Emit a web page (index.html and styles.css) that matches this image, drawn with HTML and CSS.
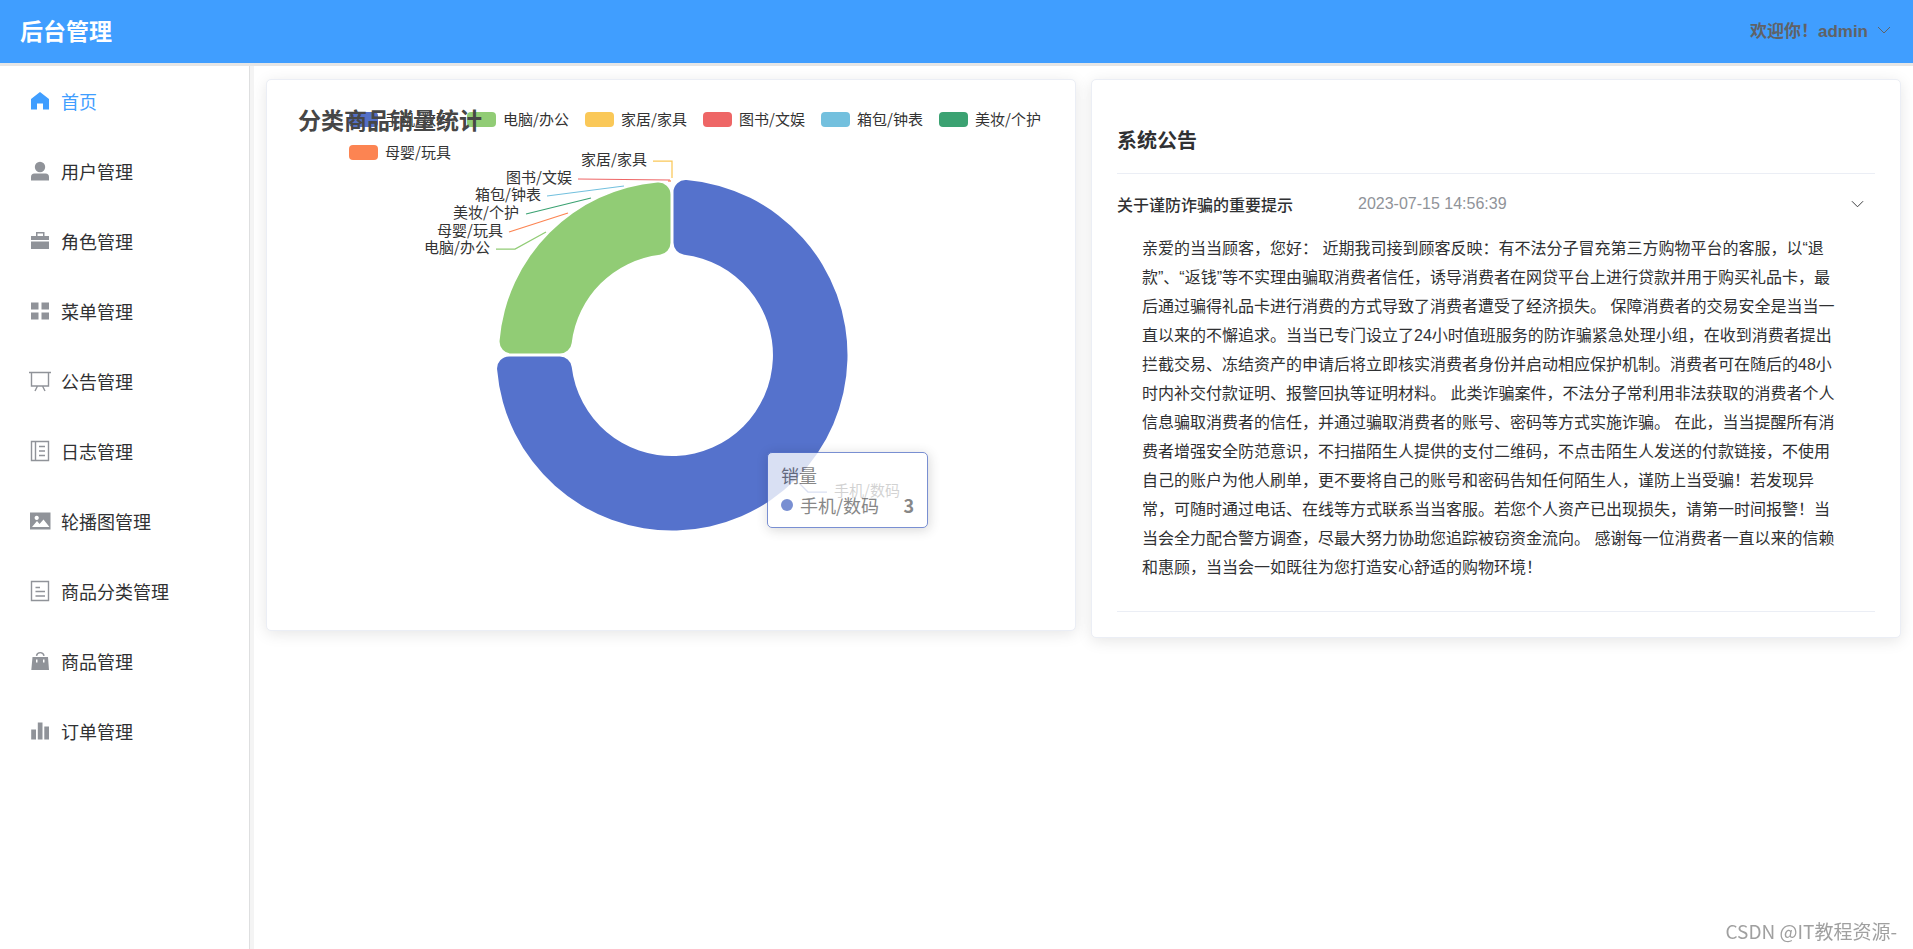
FILE: index.html
```html
<!DOCTYPE html>
<html lang="zh-CN">
<head>
<meta charset="utf-8">
<title>后台管理</title>
<link rel="stylesheet" href="styles.css">
</head>
<body>
<header class="topbar">
  <h1 class="brand">后台管理</h1>
  <button class="user-menu" type="button">
    <span>欢迎你！admin</span>
    <svg class="chevron" viewBox="0 0 14 8" aria-hidden="true"><path d="M1 1l6 6 6-6"/></svg>
  </button>
</header>

<div class="layout">
  <nav class="sidebar">
    <a class="nav-item active" href="#"><svg class="icon" viewBox="0 0 24 24"><path d="M12 3l9 7v10.500h-6v-6H9v6H3V10z"/></svg>首页</a>
    <a class="nav-item" href="#"><svg class="icon" viewBox="0 0 24 24"><circle cx="12" cy="8" r="5.200"/><path d="M3 21.500V18a3.500 3.500 0 0 1 3.500-3.500h11A3.500 3.500 0 0 1 21 18v3.500z"/></svg>用户管理</a>
    <a class="nav-item" href="#"><svg class="icon" viewBox="0 0 24 24"><path d="M3 7h5V3h8.500v4H21v4H3zM9.500 4.500V7h5.500V4.500zM3 12.500h18V20H3z" fill-rule="evenodd"/></svg>角色管理</a>
    <a class="nav-item" href="#"><svg class="icon" viewBox="0 0 24 24"><path d="M3 3.500h7.500v7H3zM13.500 3.500H21v7h-7.500zM3 13.500h7.500v7H3zM13.500 13.500H21v7h-7.500z"/></svg>菜单管理</a>
    <a class="nav-item" href="#"><svg class="icon line" viewBox="0 0 24 24"><path d="M1 3.500h22M3.500 3.500V17h17V3.500M9.500 17L7 22M14.500 17l2.500 5"/></svg>公告管理</a>
    <a class="nav-item" href="#"><svg class="icon line" viewBox="0 0 24 24"><path d="M3.500 2.500h17v19h-17zM7.500 2.500v19M11 7.500h6M11 12h6M11 16.500h6"/></svg>日志管理</a>
    <a class="nav-item" href="#"><svg class="icon" viewBox="0 0 24 24"><path fill-rule="evenodd" d="M2 3.500h20.500v17H2zM4 18h17.500l-6-7.500-4 4.500-2.500-3zM8.700 6.800a2.100 2.100 0 1 0 .01 0z"/></svg>轮播图管理</a>
    <a class="nav-item" href="#"><svg class="icon line" viewBox="0 0 24 24"><path d="M3.500 2.500h17v19h-17zM7.500 8.500H12M7.500 12.500H17M7.500 17H17"/></svg>商品分类管理</a>
    <a class="nav-item" href="#"><svg class="icon" viewBox="0 0 24 24"><path fill-rule="evenodd" d="M4.500 8h15.500l1 13H3.300zM8 10.500v3h1.500v-3zM15 10.500v3h1.500v-3z"/><path class="handle" d="M8.500 6.800a3.800 3.800 0 0 1 7.500 0"/></svg>商品管理</a>
    <a class="nav-item" href="#"><svg class="icon" viewBox="0 0 24 24"><path d="M3.200 10.500H8v10H3.200zM9.800 3.500h4.700v17H9.800zM16.300 7.500H21v13h-4.700z"/></svg>订单管理</a>
  </nav>

  <main class="content">
    <section class="card">
      <div class="chart">
        <ul class="legend">
          <li><i class="swatch blue"></i>手机/数码</li>
          <li><i class="swatch green"></i>电脑/办公</li>
          <li><i class="swatch yellow"></i>家居/家具</li>
          <li><i class="swatch red"></i>图书/文娱</li>
          <li><i class="swatch sky"></i>箱包/钟表</li>
          <li><i class="swatch teal"></i>美妆/个护</li>
          <li><i class="swatch orange"></i>母婴/玩具</li>
        </ul>
        <svg class="plot" viewBox="0 0 758 500" role="img" aria-label="分类商品销量统计">
          <g transform="translate(380 250)">
            <path fill="#5572cc" d="M1.500-162.900A12 12 0 0 1 14.500-174.900A175.500 175.500 0 1 1-174.900 14.500A12 12 0 0 1-162.900 1.500H-112.200A12 12 0 0 1-100.300 12.100A101 101 0 1 0 12.100-100.300A12 12 0 0 1 1.500-112.200Z"/>
            <path fill="#91cc75" d="M-1.500-160.400A12 12 0 0 0-14.500-172.400A173 173 0 0 0-172.400-14.500A12 12 0 0 0-160.400-1.500H-112.200A12 12 0 0 0-100.300-12.100A101 101 0 0 1-12.100-100.300A12 12 0 0 0-1.500-112.200Z"/>
          </g>
          <g class="leaders">
            <path stroke="#fac858" d="M361 56h19v17"/>
            <path stroke="#ee6666" d="M286 74l92 1"/>
            <path stroke="#73c0de" d="M255 91l77-10"/>
            <path stroke="#3ba272" d="M234 109l65-16"/>
            <path stroke="#fc8452" d="M217 127l59-19"/>
            <path stroke="#91cc75" d="M204 144h19l31-17"/>
            <path stroke="#5470c6" d="M507 378l9 9h19"/>
            <path stroke="#fc8452" d="M376 76h3"/>
          </g>
          <g class="labels">
            <text x="355" y="60">家居/家具</text>
            <text x="280" y="78">图书/文娱</text>
            <text x="249" y="95">箱包/钟表</text>
            <text x="227" y="113">美妆/个护</text>
            <text x="211" y="131">母婴/玩具</text>
            <text x="198" y="148">电脑/办公</text>
            <text class="after" x="542" y="391">手机/数码</text>
          </g>
        </svg>
        <h2 class="chart-title">分类商品销量统计</h2>
        <div class="tooltip">
          <div>销量</div>
          <div class="tooltip-row"><i class="dot"></i><span>手机/数码</span><b>3</b></div>
        </div>
      </div>
    </section>

    <section class="card">
      <h2 class="notice-title">系统公告</h2>
      <div class="notice">
        <button class="notice-head" type="button" aria-expanded="true">
          <span class="notice-name">关于谨防诈骗的重要提示</span>
          <time>2023-07-15 14:56:39</time>
          <svg class="chevron small" viewBox="0 0 14 8" aria-hidden="true"><path d="M1 1l6 6 6-6"/></svg>
        </button>
        <p class="notice-body">亲爱的当当顾客，您好： 近期我司接到顾客反映：有不法分子冒充第三方购物平台的客服，以“退款”、“返钱”等不实理由骗取消费者信任，诱导消费者在网贷平台上进行贷款并用于购买礼品卡，最后通过骗得礼品卡进行消费的方式导致了消费者遭受了经济损失。 保障消费者的交易安全是当当一直以来的不懈追求。当当已专门设立了24小时值班服务的防诈骗紧急处理小组，在收到消费者提出拦截交易、冻结资产的申请后将立即核实消费者身份并启动相应保护机制。消费者可在随后的48小时内补交付款证明、报警回执等证明材料。 此类诈骗案件，不法分子常利用非法获取的消费者个人信息骗取消费者的信任，并通过骗取消费者的账号、密码等方式实施诈骗。 在此，当当提醒所有消费者增强安全防范意识，不扫描陌生人提供的支付二维码，不点击陌生人发送的付款链接，不使用自己的账户为他人刷单，更不要将自己的账号和密码告知任何陌生人，谨防上当受骗！若发现异常，可随时通过电话、在线等方式联系当当客服。若您个人资产已出现损失，请第一时间报警！当当会全力配合警方调查，尽最大努力协助您追踪被窃资金流向。 感谢每一位消费者一直以来的信赖和惠顾，当当会一如既往为您打造安心舒适的购物环境！</p>
      </div>
    </section>
  </main>
</div>
<div class="watermark">CSDN @IT教程资源-</div>
</body>
</html>
```

FILE: styles.css
```css
* {
  box-sizing: border-box;
}

body {
  margin: 0;
  min-height: 100vh;
  display: flex;
  flex-direction: column;
  background: #fff;
  color: #303133;
  font-family: "Liberation Sans", "Noto Sans CJK SC", sans-serif;
  font-size: 18px;
}

h1, h2, p, ul {
  margin: 0;
  padding: 0;
}

button {
  border: 0;
  background: none;
  font: inherit;
  color: inherit;
  cursor: pointer;
}

.topbar {
  display: flex;
  align-items: center;
  justify-content: space-between;
  height: 66px;
  padding: 0 22px 4px 20px;
  background: #409eff;
  border-bottom: 3px solid #e6e6e6;
}

.brand {
  color: #fff;
  font-size: 23px;
}

.user-menu {
  display: flex;
  align-items: center;
  gap: 9px;
  padding: 0;
  color: #606266;
  font-size: 17px;
  font-weight: bold;
}

.chevron {
  width: 14px;
  height: 8px;
  fill: none;
  stroke: currentColor;
}

.chevron.small {
  width: 13px;
}

.layout {
  display: flex;
  flex: 1;
}

.sidebar {
  flex: 0 0 250px;
  border-right: 1px solid #dedfe0;
}

.nav-item {
  display: flex;
  align-items: center;
  gap: 9px;
  height: 70px;
  padding-left: 28px;
  color: #303133;
  text-decoration: none;
}

.icon {
  width: 24px;
  height: 24px;
  fill: #909399;
}

.icon.line,
.icon .handle {
  fill: none;
  stroke: #909399;
  stroke-width: 1.4;
}

.nav-item.active {
  color: #409eff;
}

.nav-item.active .icon {
  fill: #409eff;
}

.content {
  flex: 1;
  display: grid;
  grid-template-columns: 1fr 1fr;
  align-items: start;
  gap: 15px;
  padding: 13px 12px;
  border-left: 4px solid #f4f4f4;
}

.card {
  min-width: 0;
  padding: 25px;
  background: #fff;
  border: 1px solid #ebeef5;
  border-radius: 5px;
  box-shadow: 0 3px 15px rgba(0, 0, 0, 0.1);
}

.chart {
  position: relative;
  display: grid;
  font-family: "Noto Sans CJK SC", sans-serif;
}

.legend,
.plot {
  grid-area: 1 / 1;
}

.legend {
  display: flex;
  flex-wrap: wrap;
  align-content: flex-start;
  gap: 9px 15px;
  padding: 2px 0 0 57px;
  list-style: none;
  font-size: 15px;
  line-height: 24px;
  color: #333;
}

.legend li {
  display: flex;
  align-items: center;
  gap: 7px;
  width: 103px;
  white-space: nowrap;
}

.swatch {
  flex: none;
  width: 29px;
  height: 15px;
  border-radius: 4px;
}

.blue { background: #5470c6; }
.green { background: #91cc75; }
.yellow { background: #fac858; }
.red { background: #ee6666; }
.sky { background: #73c0de; }
.teal { background: #3ba272; }
.orange { background: #fc8452; }

.plot {
  width: 100%;
  height: 500px;
}

.leaders {
  fill: none;
  stroke-width: 1.25;
}

.labels {
  font-size: 15px;
  fill: #333;
  text-anchor: end;
}

.labels .after {
  text-anchor: start;
}

.chart-title {
  position: absolute;
  top: 0;
  left: 6px;
  font-size: 23px;
  line-height: 28px;
  color: #464646;
}

.tooltip {
  position: absolute;
  top: 347px;
  left: calc(50% + 96px);
  width: 161px;
  padding: 7px 13px;
  border: 1px solid #5470c6;
  border-radius: 5px;
  background: #fff;
  box-shadow: 1px 2px 12px rgba(0, 0, 0, 0.2);
  color: #666;
  line-height: 30px;
  opacity: 0.78;
}

.tooltip-row {
  display: flex;
  align-items: center;
  gap: 7px;
}

.tooltip-row b {
  margin-left: auto;
}

.dot {
  width: 12px;
  height: 12px;
  border-radius: 50%;
  background: #5470c6;
}

.notice-title {
  padding-top: 4px;
  font-size: 20px;
  line-height: 64px;
}

.notice {
  border: solid #ebeef5;
  border-width: 1px 0;
}

.notice-head {
  display: flex;
  align-items: center;
  width: 100%;
  height: 60px;
  padding: 0 11px 0 0;
  font-size: 16px;
}

.notice-name {
  font-weight: 500;
}

.notice-head time {
  margin-left: 65px;
  color: #909399;
}

.notice-head .chevron {
  margin-left: auto;
}

.notice-body {
  padding: 0 36px 29px 25px;
  font-size: 16px;
  line-height: 29px;
}

.watermark {
  position: fixed;
  right: 16px;
  bottom: 5px;
  font-family: "Noto Sans CJK SC", sans-serif;
  font-size: 19px;
  color: #a0a0a0;
}
```
